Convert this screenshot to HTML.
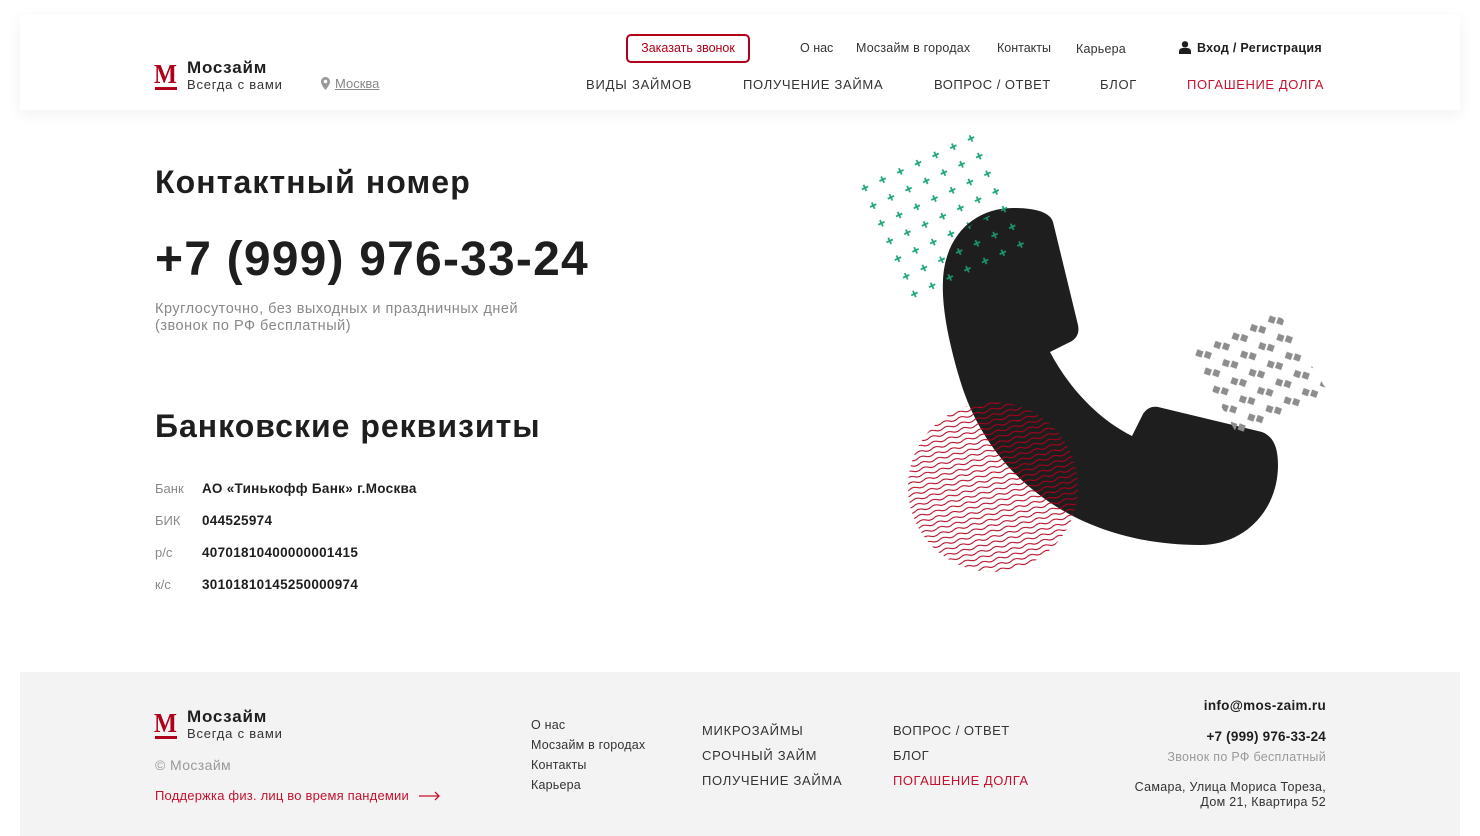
<!DOCTYPE html>
<html><head><meta charset="utf-8">
<style>
*{margin:0;padding:0;box-sizing:border-box}
body{width:1480px;height:836px;background:#fff;font-family:"Liberation Sans",sans-serif;color:#1e1e1e;position:relative;overflow:hidden}
.a{position:absolute;white-space:nowrap}
.hdr{position:absolute;left:20px;top:15px;width:1440px;height:95px;background:#fff;box-shadow:0 4px 14px rgba(0,0,0,0.06)}
.ft{position:absolute;left:20px;top:672px;width:1440px;height:164px;background:#f3f3f3}
.logoM{position:absolute;font-family:"Liberation Serif",serif;font-weight:bold;color:#b0001a;font-size:27px;line-height:24px;transform:scaleX(0.9);transform-origin:left}
.bar{position:absolute;height:3px;width:22px;background:#b0001a}
.red{color:#c4122f}
</style></head><body>
<div class="hdr"></div>
<div class="logoM" style="left:154px;top:62px">M</div><div class="bar" style="left:155px;top:87px"></div>
<div class="a" style="left:187px;top:58px;font-size:17px;font-weight:bold;letter-spacing:0.8px">Мосзайм</div>
<div class="a" style="left:187px;top:77px;font-size:13px;color:#333;letter-spacing:0.8px">Всегда с вами</div>
<svg class="a" style="left:321px;top:77px" width="9" height="13" viewBox="0 0 9 13"><path d="M4.5 0C2 0 0 2 0 4.5 0 8 4.5 13 4.5 13S9 8 9 4.5C9 2 7 0 4.5 0zm0 6.3a1.8 1.8 0 1 1 0-3.6 1.8 1.8 0 0 1 0 3.6z" fill="#999"/></svg>
<div class="a" style="left:335px;top:76px;font-size:13px;color:#888;text-decoration:underline">Москва</div>
<div class="a" style="left:626px;top:34px;width:124px;height:29px;border:2px solid #b0001a;border-radius:5px;font-size:12.5px;color:#b0001a;text-align:center;line-height:25px">Заказать звонок</div>
<div class="a" style="left:800px;top:41px;font-size:12.5px;color:#333">О нас</div>
<div class="a" style="left:856px;top:41px;font-size:12.5px;color:#333;letter-spacing:0.2px">Мосзайм в городах</div>
<div class="a" style="left:997px;top:41px;font-size:12.5px;color:#333">Контакты</div>
<div class="a" style="left:1076px;top:42px;font-size:12.5px;color:#333;letter-spacing:0.2px">Карьера</div>
<svg class="a" style="left:1179px;top:41px" width="12" height="13" viewBox="0 0 12 13"><circle cx="6" cy="3.3" r="3.2" fill="#1e1e1e"/><path d="M0 13v-2.5C0 8.3 2 7 4 7h4c2 0 4 1.3 4 3.5V13z" fill="#1e1e1e"/></svg>
<div class="a" style="left:1197px;top:41px;font-size:12.5px;font-weight:bold;letter-spacing:0.3px">Вход / Регистрация</div>
<div class="a" style="left:586px;top:77px;font-size:13px;color:#333;letter-spacing:0.8px">ВИДЫ ЗАЙМОВ</div>
<div class="a" style="left:743px;top:77px;font-size:13px;color:#333;letter-spacing:0.7px">ПОЛУЧЕНИЕ ЗАЙМА</div>
<div class="a" style="left:934px;top:77px;font-size:13px;color:#333;letter-spacing:0.5px">ВОПРОС / ОТВЕТ</div>
<div class="a" style="left:1100px;top:77px;font-size:13px;color:#333;letter-spacing:0.7px">БЛОГ</div>
<div class="a red" style="left:1187px;top:77px;font-size:13px;letter-spacing:0.6px">ПОГАШЕНИЕ ДОЛГА</div>

<div class="a" style="left:155px;top:164px;font-size:32px;font-weight:bold;letter-spacing:1.1px">Контактный номер</div>
<div class="a" style="left:155px;top:232px;font-size:48px;font-weight:bold;letter-spacing:1.2px">+7 (999) 976-33-24</div>
<div class="a" style="left:155px;top:301px;font-size:14.5px;color:#888;line-height:17px;letter-spacing:0.5px">Круглосуточно, без выходных и праздничных дней<br>(звонок по РФ бесплатный)</div>
<div class="a" style="left:155px;top:408px;font-size:32px;font-weight:bold;letter-spacing:1px">Банковские реквизиты</div>
<div class="a" style="left:155px;top:481px;font-size:13px;color:#888">Банк</div>
<div class="a" style="left:202px;top:481px;font-size:13.5px;font-weight:bold;letter-spacing:0.3px">АО «Тинькофф Банк» г.Москва</div>
<div class="a" style="left:155px;top:513px;font-size:13px;color:#888">БИК</div>
<div class="a" style="left:202px;top:513px;font-size:13.5px;font-weight:bold;letter-spacing:0.3px">044525974</div>
<div class="a" style="left:155px;top:545px;font-size:13px;color:#888">р/с</div>
<div class="a" style="left:202px;top:545px;font-size:13.5px;font-weight:bold;letter-spacing:0.3px">40701810400000001415</div>
<div class="a" style="left:155px;top:577px;font-size:13px;color:#888">к/с</div>
<div class="a" style="left:202px;top:577px;font-size:13.5px;font-weight:bold;letter-spacing:0.3px">30101810145250000974</div>

<svg class="a" style="left:0;top:0" width="1480" height="836" viewBox="0 0 1480 836">
<defs>
<pattern id="wav" width="16" height="5.6" patternUnits="userSpaceOnUse" patternTransform="rotate(-15)">
<path d="M0 2.8 Q4 0.6 8 2.8 T16 2.8" fill="none" stroke="#b0001a" stroke-width="1.1"/></pattern>
<pattern id="plus" width="19.5" height="19.5" patternUnits="userSpaceOnUse" patternTransform="translate(857 185) rotate(-25)">
<path d="M2.5 6h7M6 2.5v7" stroke="#1aa37a" stroke-width="1.7"/></pattern>
<pattern id="dia" width="20" height="20" patternUnits="userSpaceOnUse" patternTransform="translate(1192 350) rotate(-25)">
<rect x="2" y="3" width="6.5" height="6.5" fill="#8d8d8d" transform="rotate(45 5.25 6.25)"/>
<rect x="9" y="8" width="6.5" height="6.5" fill="#8d8d8d" transform="rotate(45 12.25 11.25)"/></pattern>
<clipPath id="cc"><circle cx="993" cy="487" r="85"/></clipPath>
</defs>
<polygon points="853,183 970,128 1032,245 912,302" fill="url(#plus)"/>
<path d="M1013,208 C1035,208 1050,212 1053,222 L1078,325 C1080,335 1075,340 1068,343 L1050,352 C1070,390 1100,420 1132,436 L1143,414 C1147,408 1152,406 1158,407 L1262,432 C1272,436 1278,445 1278,465 C1278,510 1245,545 1200,545 C1080,545 990,480 960,380 C945,330 942,300 943,280 C945,235 975,208 1013,208 Z" fill="#1e1e1e"/>
<polygon points="942,240 1010,205 1032,245 945,290" fill="url(#plus)" opacity="0.9"/>
<g clip-path="url(#cc)"><rect x="900" y="395" width="190" height="190" fill="url(#wav)"/></g>
<polygon points="1188,348 1276,308 1328,392 1238,436" fill="url(#dia)"/>
</svg>

<div class="ft"></div>
<div class="logoM" style="left:154px;top:711px">M</div><div class="bar" style="left:155px;top:736px"></div>
<div class="a" style="left:187px;top:707px;font-size:17px;font-weight:bold;letter-spacing:0.8px">Мосзайм</div>
<div class="a" style="left:187px;top:726px;font-size:13px;color:#333;letter-spacing:0.8px">Всегда с вами</div>
<div class="a" style="left:155px;top:757px;font-size:14px;color:#999;letter-spacing:0.4px">© Мосзайм</div>
<div class="a red" style="left:155px;top:788px;font-size:13px;letter-spacing:0.2px">Поддержка физ. лиц во время пандемии</div>
<svg class="a" style="left:419px;top:791px" width="22" height="10"><path d="M0 5h20M16 1l4 4-4 4" stroke="#c4122f" stroke-width="1.3" fill="none"/></svg>
<div class="a" style="left:531px;top:715px;font-size:12.5px;color:#333;line-height:20px;letter-spacing:0.2px">О нас<br>Мосзайм в городах<br>Контакты<br>Карьера</div>
<div class="a" style="left:702px;top:718px;font-size:13px;color:#333;line-height:25px;letter-spacing:0.7px">МИКРОЗАЙМЫ<br>СРОЧНЫЙ ЗАЙМ<br>ПОЛУЧЕНИЕ ЗАЙМА</div>
<div class="a" style="left:893px;top:718px;font-size:13px;color:#333;line-height:25px;letter-spacing:0.5px">ВОПРОС / ОТВЕТ<br>БЛОГ<br><span class="red">ПОГАШЕНИЕ ДОЛГА</span></div>
<div class="a" style="right:154px;top:698px;font-size:13.5px;font-weight:bold;text-align:right;letter-spacing:0.3px">info@mos-zaim.ru</div>
<div class="a" style="right:154px;top:729px;font-size:13.5px;font-weight:bold;text-align:right;letter-spacing:0.2px">+7 (999) 976-33-24</div>
<div class="a" style="right:154px;top:750px;font-size:12.5px;color:#999;text-align:right;letter-spacing:0.3px">Звонок по РФ бесплатный</div>
<div class="a" style="right:154px;top:780px;font-size:12.5px;color:#333;text-align:right;line-height:15px;letter-spacing:0.3px">Самара, Улица Мориса Тореза,<br>Дом 21, Квартира 52</div>
</body></html>
